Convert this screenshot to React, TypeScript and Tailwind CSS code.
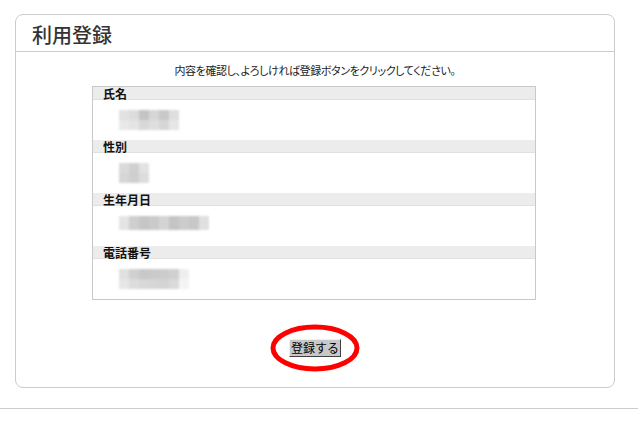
import React from "react";

const jp = { fontFamily: '"Noto Sans CJK JP", "Liberation Sans", sans-serif' };

type BlurProps = { rows: string[][]; cell?: [number, number] };

const Blur = ({ rows, cell = [10, 10] }: BlurProps) => (
  <div className="flex flex-col blur-[1px]">
    {rows.map((row, i) => (
      <div key={i} className="flex">
        {row.map((c, j) => (
          <div key={j} style={{ width: cell[0], height: cell[1], background: c }} />
        ))}
      </div>
    ))}
  </div>
);

const fields: { label: string; blur: BlurProps }[] = [
  {
    label: "氏名",
    blur: {
      rows: [
        ["#e2e2e2", "#dcdcdc", "#c4c4c4", "#d6d6d6", "#c8c8c8", "#dedede"],
        ["#e8e8e8", "#e4e4e4", "#d8d8d8", "#dedede", "#d6d6d6", "#e6e6e6"],
      ],
    },
  },
  {
    label: "性別",
    blur: {
      rows: [
        ["#dadada", "#d0d0d0", "#e2e2e2"],
        ["#d6d6d6", "#cfcfcf", "#dcdcdc"],
      ],
    },
  },
  {
    label: "生年月日",
    blur: {
      rows: [["#e4e4e4", "#cfcfcf", "#c6c6c6", "#cacaca", "#d4d4d4", "#c4c4c4", "#cccccc", "#c8c8c8", "#e0e0e0"]],
      cell: [10, 14],
    },
  },
  {
    label: "電話番号",
    blur: {
      rows: [
        ["#e0e0e0", "#d0d0d0", "#c8c8c8", "#cacaca", "#cccccc", "#d0d0d0", "#eeeeee"],
        ["#e6e6e6", "#dcdcdc", "#d8d8d8", "#d6d6d6", "#d4d4d4", "#dadada", "#f4f4f4"],
      ],
    },
  },
];

export default function App() {
  return (
    <div className="w-[638px] h-[434px] bg-white text-[#222] overflow-hidden" style={jp}>
      <div className="pt-[14px] pl-[15px]">
        <section className="w-[600px] h-[374px] border border-[#cccccc] rounded-[8px] flex flex-col">
          <header className="h-[37px] border-b border-[#cccccc] pl-4 pt-[7px]">
            <h1 className="text-[20px] leading-[26px] font-medium text-[#333]">利用登録</h1>
          </header>

          <div className="flex flex-col items-center">
            <p className="mt-[11px] text-[11px] leading-[14px] [font-feature-settings:'palt'] tracking-[-0.4px]">
              内容を確認し、よろしければ登録ボタンをクリックしてください。
            </p>

            <div className="mt-[9px] -ml-[2px] w-[444px] border border-[#c8c8c8] flex flex-col">
              {fields.map((f) => (
                <div key={f.label} className="flex flex-col h-[53px]">
                  <div className="h-[13px] bg-[#ececec] border-b border-[#e0e0e0] pl-[10px] text-[12px] leading-[13px] font-bold text-[#111]">
                    {f.label}
                  </div>
                  <div className="pl-[26px] pt-[10px]">
                    <Blur {...f.blur} />
                  </div>
                </div>
              ))}
            </div>

            <div className="relative mt-[39px] flex items-center justify-center">
              <button className="h-[18px] px-[1px] bg-[#c8c8c8] border border-t-[#f0f0f0] border-l-[#f0f0f0] border-r-[#404040] border-b-[#404040] text-[12px] leading-[14px] text-black">
                登録する
              </button>
              <svg
                className="absolute left-1/2 top-1/2 -translate-x-1/2 -translate-y-1/2"
                width="92"
                height="50"
                viewBox="0 0 92 50"
              >
                <ellipse cx="46" cy="25" rx="42" ry="21" fill="none" stroke="#ff0000" strokeWidth="5" />
              </svg>
            </div>
          </div>
        </section>
      </div>
      <div className="mt-[20px] border-t border-[#cccccc]" />
    </div>
  );
}
